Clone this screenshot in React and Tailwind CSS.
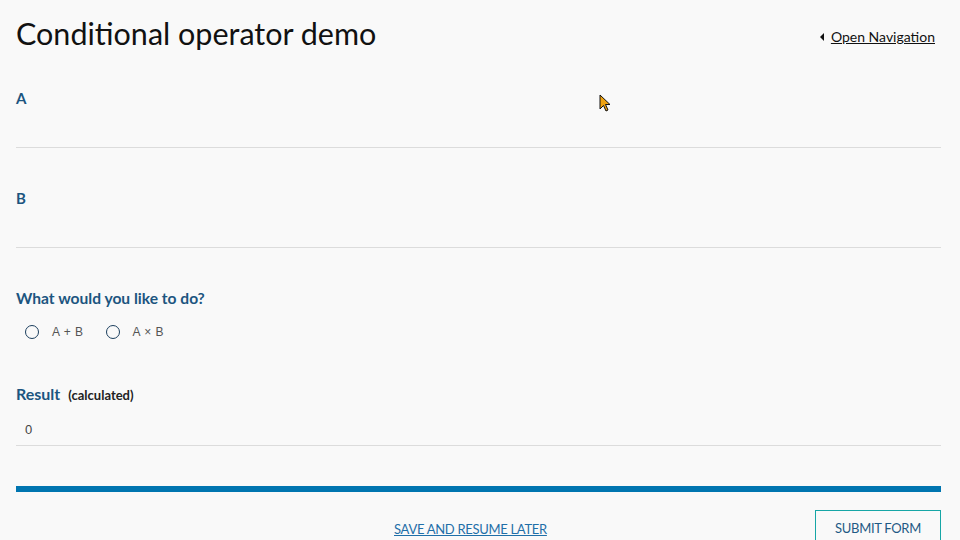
export default function App() {
  const label = "text-[#1c5580] font-bold";
  return (
    <div className="relative w-[960px] h-[540px] overflow-hidden bg-[#f9f9f9] pl-4 pr-[19px]" style={{ fontFamily: "Lato, 'Noto Sans', sans-serif" }}>
      <div className="flex items-start justify-between pt-[14px]">
        <h1 className="text-[30.5px] leading-[38px] text-[#111]">Conditional operator demo</h1>
        <a className="mt-[13px] mr-[6px] flex items-center text-[14px] leading-[20px] text-[#111] underline">
          <span className="mr-[7px] inline-block w-0 h-0 border-y-[4px] border-y-transparent border-r-[4px] border-r-[#111]"></span>
          Open Navigation
        </a>
      </div>

      <div className="mt-[36px]">
        <div className={`${label} text-[15px] leading-[20px]`}>A</div>
        <div className="h-[40px] border-b border-[#dcdcdc]"></div>
      </div>

      <div className="mt-[40px]">
        <div className={`${label} text-[15px] leading-[20px]`}>B</div>
        <div className="h-[40px] border-b border-[#dcdcdc]"></div>
      </div>

      <div className="mt-[40px]">
        <div className={`${label} text-[15.6px] leading-[20px]`}>What would you like to do?</div>
        <div className="mt-[14px] flex items-center h-[20px] pl-[9px] text-[12px] text-[#555] tracking-[0.5px]" style={{ fontFamily: "'Liberation Sans', sans-serif" }}>
          <span className="w-[14px] h-[14px] rounded-full border-[1.5px] border-[#1c3f5e]"></span>
          <span className="ml-[13px]">A + B</span>
          <span className="ml-[22px] w-[14px] h-[14px] rounded-full border-[1.5px] border-[#1c3f5e]"></span>
          <span className="ml-[13px]">A × B</span>
        </div>
      </div>

      <div className="mt-[42px]">
        <div className={`${label} text-[16px] leading-[20px] flex items-baseline`}>
          Result<span className="ml-[8px] text-[13px] text-[#222]">(calculated)</span>
        </div>
        <div className="h-[41px] border-b border-[#dcdcdc] flex items-end pb-[7px] pl-[9px] text-[13px] leading-[16px] text-[#444]" style={{ fontFamily: "'Liberation Sans', sans-serif" }}>0</div>
      </div>

      <div className="mt-[40px] h-[6px] bg-[#0075b0]"></div>

      <div className="mt-[18px] flex items-start">
        <a className="ml-[378px] mt-[11px] text-[13px] leading-[16px] text-[#1f6fa8] underline tracking-[-0.3px]">SAVE AND RESUME LATER</a>
        <button className="ml-auto w-[126px] h-[38px] border border-[#16a6a6] text-[13px] text-[#1f5a85] tracking-[-0.3px]">SUBMIT FORM</button>
      </div>

      <svg className="absolute left-[599px] top-[94px]" width="14" height="20" viewBox="0 0 14 20">
        <path d="M1 1 L1 15 L4.5 11.5 L7 17 L9 16 L6.5 10.5 L11 10.5 Z" fill="#f0a310" stroke="#111" strokeWidth="1" strokeLinejoin="round" />
      </svg>
    </div>
  );
}
